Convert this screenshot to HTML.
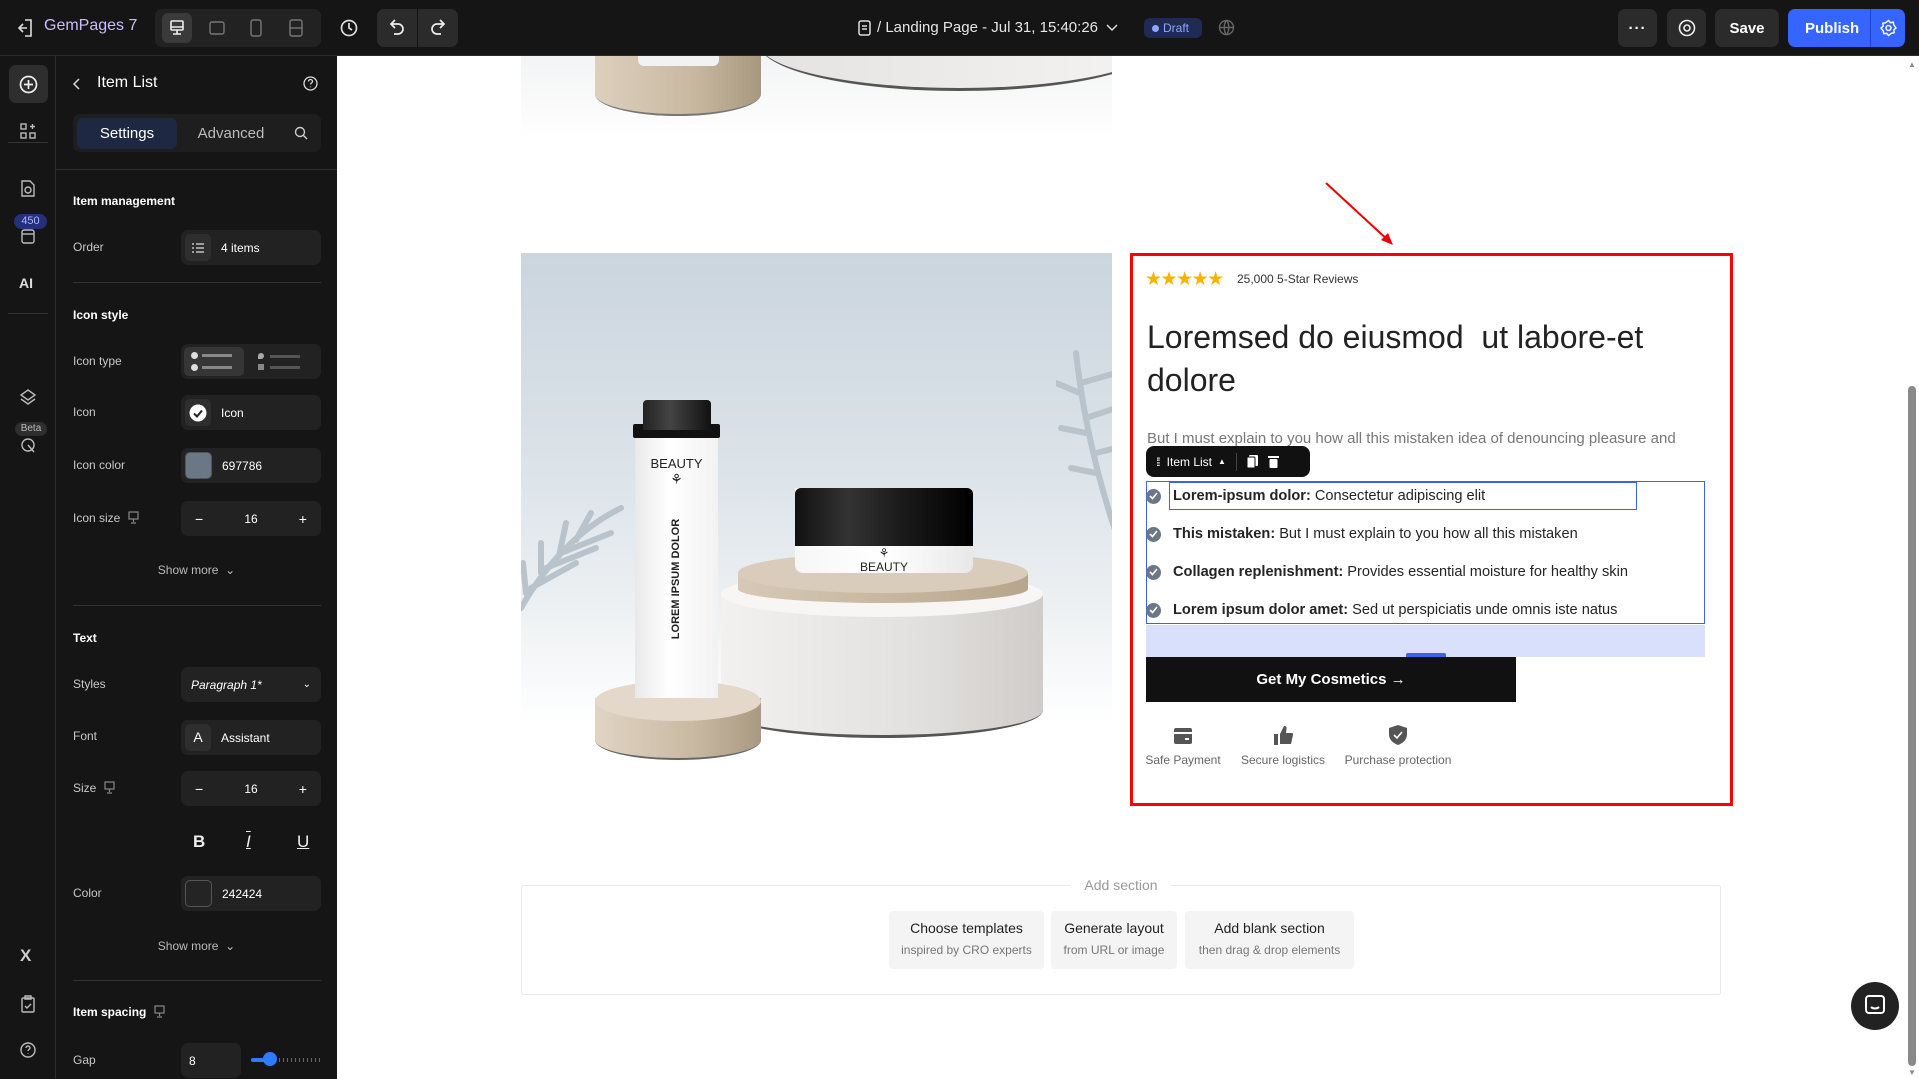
<!DOCTYPE html>
<html><head><meta charset="utf-8"><style>
*{box-sizing:border-box;margin:0;padding:0}
body{width:1919px;height:1079px;overflow:hidden;font-family:"Liberation Sans",sans-serif;background:#fff;position:relative}
.abs{position:absolute}
.top{left:0;top:0;width:1919px;height:56px;background:#151515;border-bottom:1px solid #2b2b2b}
.rail{left:0;top:56px;width:56px;height:1023px;background:#151515;border-right:1px solid #2b2b2b}
.panel{left:56px;top:56px;width:281px;height:1023px;background:#151515}
.lbl{position:absolute;left:17px;color:#c8c8c8;font-size:12px;transform:translateY(-50%)}
.hd{position:absolute;left:17px;color:#fff;font-size:12px;font-weight:bold;transform:translateY(-50%)}
.inp{position:absolute;left:125px;width:140px;height:35px;background:#222;border-radius:7px;color:#fff;font-size:12px;display:flex;align-items:center}
.sep{position:absolute;left:17px;width:248px;height:1px;background:#333}
.sm{position:absolute;left:0;width:281px;text-align:center;color:#bbb;font-size:12px;transform:translateY(-50%)}
.btn{position:absolute;top:9px;height:38px;border-radius:7px;background:#2b2b2b;color:#fff;display:flex;align-items:center;justify-content:center;font-size:15px;font-weight:bold}
.item{position:absolute;left:1146px;font-size:14.6px;color:#242424;display:flex;align-items:center;transform:translateY(-50%);white-space:nowrap}
.item b{margin-right:4px}
.chk{width:15px;height:15px;border-radius:50%;background:#697786;margin-right:12px;display:flex;align-items:center;justify-content:center}
.tb{position:absolute;top:911px;height:58px;background:#f4f4f4;border-radius:4px;text-align:center;padding-top:9px}
.tb .a{font-size:14px;color:#222}
.tb .b{font-size:12px;color:#777;margin-top:7px}
</style></head><body>

<div class="abs top">
  <svg class="abs" style="left:18px;top:19px" width="16" height="18" viewBox="0 0 16 18" fill="none" stroke="#ddd" stroke-width="1.6"><path d="M7 1h6v16H7M1 9h8M5 5l-4 4 4 4"/></svg>
  <div class="abs" style="left:44px;top:17px;color:#cbbcff;font-size:16px">GemPages 7</div>
  <div class="abs" style="left:155px;top:9px;width:166px;height:38px;background:#222;border-radius:7px"></div>
  <div class="abs" style="left:162px;top:13px;width:30px;height:30px;background:#3a3a3a;border-radius:6px"></div>
  <svg class="abs" style="left:170px;top:20px" width="14" height="16" viewBox="0 0 14 16" fill="none" stroke="#eee" stroke-width="1.6"><rect x="1" y="1" width="12" height="9" rx="1"/><path d="M7 10v4M3 14h8M1 7h12"/></svg>
  <svg class="abs" style="left:209px;top:21px" width="16" height="14" viewBox="0 0 16 14" fill="none" stroke="#777" stroke-width="1.4"><rect x="1" y="1" width="14" height="12" rx="2"/></svg>
  <svg class="abs" style="left:250px;top:19px" width="12" height="18" viewBox="0 0 12 18" fill="none" stroke="#777" stroke-width="1.4"><rect x="1" y="1" width="10" height="16" rx="2"/></svg>
  <svg class="abs" style="left:289px;top:19px" width="14" height="18" viewBox="0 0 14 18" fill="none" stroke="#777" stroke-width="1.4"><rect x="1" y="1" width="12" height="16" rx="2"/><path d="M1 9h12"/></svg>
  <svg class="abs" style="left:340px;top:19px" width="18" height="18" viewBox="0 0 18 18" fill="none" stroke="#ddd" stroke-width="1.7"><circle cx="9" cy="9" r="7.5"/><path d="M9 4v5l3 2"/></svg>
  <div class="abs" style="left:377px;top:9px;width:81px;height:38px;background:#2b2b2b;border-radius:7px"></div>
  <div class="abs" style="left:417px;top:9px;width:1px;height:38px;background:#151515"></div>
  <svg class="abs" style="left:390px;top:19px" width="14" height="16" viewBox="0 0 14 16" fill="none" stroke="#eee" stroke-width="1.7"><path d="M5 1L1 5l4 4M1 5h7a5 5 0 010 10H4"/></svg>
  <svg class="abs" style="left:431px;top:19px" width="14" height="16" viewBox="0 0 14 16" fill="none" stroke="#eee" stroke-width="1.7"><path d="M9 1l4 4-4 4M13 5H6a5 5 0 000 10h4"/></svg>
  <svg class="abs" style="left:858px;top:20px" width="13" height="16" viewBox="0 0 13 16" fill="none" stroke="#ddd" stroke-width="1.5"><rect x="1" y="1" width="11" height="14" rx="2"/><path d="M4 6h5M4 9h5"/></svg>
  <div class="abs" style="left:877px;top:19px;color:#e6e6e6;font-size:15px">/ Landing Page - Jul 31, 15:40:26</div>
  <svg class="abs" style="left:1106px;top:24px" width="12" height="8" viewBox="0 0 12 8" fill="none" stroke="#ddd" stroke-width="1.5"><path d="M1 1l5 5 5-5"/></svg>
  <div class="abs" style="left:1144px;top:18px;width:58px;height:20px;background:#1f2b55;border-radius:6px;color:#8fa6ff;font-size:12px;line-height:20px;padding-left:8px"><span style="display:inline-block;width:7px;height:7px;border-radius:50%;background:#8fa6ff;margin-right:4px;vertical-align:0"></span>Draft</div>
  <svg class="abs" style="left:1218px;top:19px" width="17" height="17" viewBox="0 0 17 17" fill="none" stroke="#666" stroke-width="1.4"><circle cx="8.5" cy="8.5" r="7"/><path d="M1.5 8.5h14M8.5 1.5c-3 3-3 11 0 14M8.5 1.5c3 3 3 11 0 14"/></svg>
  <div class="btn" style="left:1618px;width:39px;letter-spacing:1px">···</div>
  <div class="btn" style="left:1667px;width:39px"><svg width="18" height="18" viewBox="0 0 18 18" fill="none" stroke="#eee" stroke-width="1.6"><circle cx="9" cy="9" r="7.5"/><circle cx="9" cy="9" r="3"/></svg></div>
  <div class="btn" style="left:1715px;width:64px">Save</div>
  <div class="btn" style="left:1788px;width:117px;background:#3564ff;justify-content:flex-start;padding-left:17px">Publish</div>
  <div class="abs" style="left:1870px;top:9px;width:1px;height:38px;background:#1e43c8"></div>
  <svg class="abs" style="left:1880px;top:19px" width="17" height="18" viewBox="0 0 18 18" fill="none" stroke="#fff" stroke-width="1.5"><circle cx="9" cy="9" r="2.6"/><path d="M9 1l2 2.4 3-.6.6 3L17 9l-2.4 2 .4 3-3 .6L9 17l-2-2.4-3 .4-.6-3L1 9l2.4-2L3 4l3-.6z"/></svg>
</div>

<div class="abs rail">
  <div class="abs" style="left:9px;top:9px;width:39px;height:38px;background:#2e2e2e;border-radius:7px"></div>
  <svg class="abs" style="left:19px;top:19px" width="19" height="19" viewBox="0 0 19 19" fill="none" stroke="#eee" stroke-width="1.7"><circle cx="9.5" cy="9.5" r="8"/><path d="M9.5 5v9M5 9.5h9"/></svg>
  <svg class="abs" style="left:20px;top:67px" width="16" height="16" viewBox="0 0 16 16" fill="none" stroke="#bbb" stroke-width="1.4"><rect x="1" y="1" width="5" height="5"/><rect x="1" y="10" width="5" height="5"/><rect x="10" y="10" width="5" height="5"/><path d="M12.5 1v5M10 3.5h5"/></svg>
  <div class="abs" style="left:8px;top:86px;width:40px;height:1px;background:#333"></div>
  <svg class="abs" style="left:20px;top:124px" width="15" height="17" viewBox="0 0 15 17" fill="none" stroke="#bbb" stroke-width="1.4"><path d="M2 1h8l4 4v11H2z"/><circle cx="8" cy="10" r="3"/></svg>
  <div class="abs" style="left:14px;top:158px;width:33px;height:15px;background:#24307a;border-radius:8px;color:#aab8ff;font-size:11px;text-align:center;line-height:15px">450</div>
  <svg class="abs" style="left:21px;top:173px" width="14" height="15" viewBox="0 0 14 15" fill="none" stroke="#bbb" stroke-width="1.4"><rect x="1" y="1" width="12" height="13" rx="2"/><path d="M1 5h12"/></svg>
  <div class="abs" style="left:19px;top:219px;color:#ddd;font-size:14px;font-weight:bold">AI</div>
  <div class="abs" style="left:8px;top:257px;width:40px;height:1px;background:#333"></div>
  <svg class="abs" style="left:20px;top:333px" width="16" height="17" viewBox="0 0 16 17" fill="none" stroke="#bbb" stroke-width="1.4"><path d="M8 1l7 5-7 5-7-5zM1 10l7 5 7-5"/></svg>
  <div class="abs" style="left:15px;top:366px;width:32px;height:14px;background:#2e2e2e;border-radius:7px;color:#bbb;font-size:10px;text-align:center;line-height:14px">Beta</div>
  <svg class="abs" style="left:21px;top:382px" width="15" height="16" viewBox="0 0 15 16" fill="none" stroke="#bbb" stroke-width="1.4"><circle cx="7" cy="7" r="6"/><path d="M7 7l6 7"/></svg>
  <div class="abs" style="left:20px;top:890px;color:#ccc;font-size:17px;font-weight:bold">X</div>
  <svg class="abs" style="left:21px;top:939px" width="14" height="18" viewBox="0 0 14 18" fill="none" stroke="#bbb" stroke-width="1.4"><rect x="1" y="3" width="12" height="14" rx="1"/><path d="M4 1h6v3H4zM4 11l2 2 4-4"/></svg>
  <svg class="abs" style="left:20px;top:986px" width="16" height="16" viewBox="0 0 16 16" fill="none" stroke="#bbb" stroke-width="1.4"><circle cx="8" cy="8" r="7"/><path d="M6 6a2 2 0 114 0c0 1.5-2 1.5-2 3M8 11.5v.5"/></svg>
</div>

<div class="abs panel">
  <svg class="abs" style="left:17px;top:22px" width="8" height="12" viewBox="0 0 8 12" fill="none" stroke="#ddd" stroke-width="1.5"><path d="M6 1L1 6l5 5"/></svg>
  <div class="abs" style="left:41px;top:18px;color:#fff;font-size:16px">Item List</div>
  <svg class="abs" style="left:247px;top:20px" width="15" height="15" viewBox="0 0 15 15" fill="none" stroke="#ddd" stroke-width="1.3"><circle cx="7.5" cy="7.5" r="6.5"/><path d="M5.5 5.5a2 2 0 114 0c0 1.5-2 1.5-2 3M7.5 10.5v.8"/></svg>
  <div class="abs" style="left:17px;top:58px;width:248px;height:38px;background:#1e1e1e;border-radius:7px"></div>
  <div class="abs" style="left:21px;top:62px;width:100px;height:31px;background:#1f2843;border-radius:6px;color:#fff;font-size:15px;text-align:center;line-height:31px">Settings</div>
  <div class="abs" style="left:140px;top:62px;width:70px;color:#bbb;font-size:15px;text-align:center;line-height:31px">Advanced</div>
  <svg class="abs" style="left:238px;top:70px" width="14" height="14" viewBox="0 0 14 14" fill="none" stroke="#ccc" stroke-width="1.4"><circle cx="6" cy="6" r="4.5"/><path d="M9.5 9.5L13 13"/></svg>
  <div class="abs" style="left:0;top:113px;width:281px;height:1px;background:#2e2e2e"></div>

  <div class="hd" style="top:145px">Item management</div>
  <div class="lbl" style="top:191px">Order</div>
  <div class="inp" style="top:174px"><div style="width:26px;height:27px;background:#2e2e2e;border-radius:5px;margin:0 10px 0 4px;display:flex;align-items:center;justify-content:center"><svg width="12" height="10" viewBox="0 0 12 10" stroke="#ddd" stroke-width="1.3"><path d="M0 1h2M4 1h8M0 5h2M4 5h8M0 9h2M4 9h8"/></svg></div>4 items</div>
  <div class="sep" style="top:226px"></div>

  <div class="hd" style="top:259px">Icon style</div>
  <div class="lbl" style="top:305px">Icon type</div>
  <div class="inp" style="top:288px;padding:3px"><div style="width:60px;height:29px;background:#363636;border-radius:5px;position:relative">
    <span style="position:absolute;left:7px;top:5px;width:7px;height:7px;border-radius:50%;background:#ddd"></span><span style="position:absolute;left:18px;top:7px;width:30px;height:3px;background:#888"></span>
    <span style="position:absolute;left:7px;top:17px;width:7px;height:7px;border-radius:50%;background:#ddd"></span><span style="position:absolute;left:18px;top:19px;width:30px;height:3px;background:#888"></span></div>
    <div style="width:70px;height:29px;position:relative">
    <span style="position:absolute;left:14px;top:6px;width:6px;height:6px;border-radius:50% 50% 50% 0;background:#aaa"></span><span style="position:absolute;left:26px;top:8px;width:30px;height:3px;background:#555"></span>
    <span style="position:absolute;left:14px;top:17px;width:6px;height:6px;background:#888"></span><span style="position:absolute;left:26px;top:19px;width:30px;height:3px;background:#555"></span></div></div>
  <div class="lbl" style="top:356px">Icon</div>
  <div class="inp" style="top:339px"><div style="width:26px;height:27px;background:#2e2e2e;border-radius:5px;margin:0 10px 0 4px;display:flex;align-items:center;justify-content:center"><svg width="18" height="18" viewBox="0 0 18 18"><circle cx="9" cy="9" r="8.5" fill="#fff"/><path d="M5 9.5l3 3 5-6" stroke="#222" stroke-width="2" fill="none"/></svg></div>Icon</div>
  <div class="lbl" style="top:409px">Icon color</div>
  <div class="inp" style="top:392px"><div style="width:27px;height:27px;background:#697786;border-radius:5px;margin:0 10px 0 4px;border:1px solid #555"></div>697786</div>
  <div class="lbl" style="top:462px">Icon size <svg width="11" height="13" viewBox="0 0 11 13" fill="none" stroke="#888" stroke-width="1.2" style="vertical-align:-2px;margin-left:4px"><rect x="1" y="1" width="9" height="7"/><path d="M5.5 8v3M3 12h5"/></svg></div>
  <div class="inp" style="top:445px;justify-content:space-between;padding:0 14px;font-size:14px"><span>−</span><span style="font-size:12px">16</span><span>+</span></div>
  <div class="sm" style="top:514px">Show more &nbsp;⌄</div>
  <div class="sep" style="top:549px"></div>

  <div class="hd" style="top:582px">Text</div>
  <div class="lbl" style="top:628px">Styles</div>
  <div class="inp" style="top:611px;padding:0 10px;justify-content:space-between;font-style:italic"><span>Paragraph 1*</span><span style="font-style:normal;font-size:10px">⌄</span></div>
  <div class="lbl" style="top:680px">Font</div>
  <div class="inp" style="top:664px"><div style="width:26px;height:27px;background:#2e2e2e;border-radius:5px;margin:0 10px 0 4px;text-align:center;line-height:27px;font-size:14px">A</div>Assistant</div>
  <div class="lbl" style="top:732px">Size <svg width="11" height="13" viewBox="0 0 11 13" fill="none" stroke="#888" stroke-width="1.2" style="vertical-align:-2px;margin-left:4px"><rect x="1" y="1" width="9" height="7"/><path d="M5.5 8v3M3 12h5"/></svg></div>
  <div class="inp" style="top:715px;justify-content:space-between;padding:0 14px;font-size:14px"><span>−</span><span style="font-size:12px">16</span><span>+</span></div>
  <div class="abs" style="left:137px;top:776px;color:#eee;font-size:17px;font-weight:bold">B</div>
  <div class="abs" style="left:190px;top:776px;color:#eee;font-size:17px;font-style:italic;text-decoration:underline overline">I</div>
  <div class="abs" style="left:241px;top:776px;color:#eee;font-size:17px;text-decoration:underline">U</div>
  <div class="lbl" style="top:837px">Color</div>
  <div class="inp" style="top:820px"><div style="width:27px;height:27px;background:#242424;border-radius:5px;margin:0 10px 0 4px;border:1px solid #555"></div>242424</div>
  <div class="sm" style="top:890px">Show more &nbsp;⌄</div>
  <div class="sep" style="top:924px"></div>
  <div class="hd" style="top:956px">Item spacing <svg width="11" height="13" viewBox="0 0 11 13" fill="none" stroke="#888" stroke-width="1.2" style="vertical-align:-2px;margin-left:4px"><rect x="1" y="1" width="9" height="7"/><path d="M5.5 8v3M3 12h5"/></svg></div>
  <div class="lbl" style="top:1004px">Gap</div>
  <div class="inp" style="top:987px;width:60px;padding-left:8px">8</div>
  <div class="abs" style="left:195px;top:1002px;width:18px;height:4px;background:#2f7bff;border-radius:2px"></div>
  <div class="abs" style="left:207px;top:996px;width:14px;height:14px;background:#2f7bff;border-radius:50%"></div>
  <div class="abs" style="left:223px;top:1002px;width:42px;height:4px;background:repeating-linear-gradient(90deg,#666 0 1px,transparent 1px 4px)"></div>
</div>

<div class="abs" style="left:521px;top:56px;width:591px;height:81px;background:linear-gradient(#f3f4f5,#fbfbfb 70%,#fff);overflow:hidden">
  <div class="abs" style="left:238px;top:-60px;width:400px;height:95px;border-radius:50%;background:linear-gradient(90deg,#e4e3e2,#f4f3f2);border-bottom:3px solid #555"></div>
  <div class="abs" style="left:74px;top:-30px;width:166px;height:90px;background:linear-gradient(90deg,#ddd0bd,#c8b8a0 60%,#a8987f);border-radius:0 0 50% 50%/0 0 22px 22px;border-bottom:2px solid #777"></div>
  <div class="abs" style="left:117px;top:-10px;width:81px;height:20px;background:#f2f2f2;border-radius:0 0 6px 6px"></div>
</div>

<div class="abs" style="left:521px;top:253px;width:591px;height:512px;background:linear-gradient(#cbd5de,#dde4ea 45%,#eef1f3 70%,#fff 92%);overflow:hidden">
  <svg class="abs" style="left:0;top:215px" width="110" height="150" viewBox="0 0 110 150"><g stroke="#b9c3cc" stroke-width="6" stroke-linecap="round" fill="none"><path d="M0 140 Q40 70 100 40"/><path d="M10 120 L55 95"/><path d="M25 100 L75 80"/><path d="M40 85 L90 65"/><path d="M5 125 L2 95"/><path d="M20 105 L20 75"/><path d="M38 88 L45 55"/><path d="M55 72 L70 45"/></g></svg>
  <svg class="abs" style="left:535px;top:90px" width="60" height="200" viewBox="0 0 60 200"><g stroke="#b9c3cc" stroke-width="6" stroke-linecap="round" fill="none"><path d="M60 190 Q30 100 20 10"/><path d="M25 40 L60 30"/><path d="M30 75 L60 65"/><path d="M40 110 L60 105"/><path d="M24 50 L0 40"/><path d="M30 90 L5 85"/><path d="M40 130 L15 125"/></g></svg>
  <div class="abs" style="left:200px;top:340px;width:322px;height:145px;background:linear-gradient(90deg,#f2f1f0,#e3e1df 60%,#cfccc9);border-radius:50%/0 0 28px 28px;border-bottom:3px solid #555"></div>
  <div class="abs" style="left:200px;top:318px;width:322px;height:46px;border-radius:50%;background:#f7f6f5"></div>
  <div class="abs" style="left:217px;top:320px;width:290px;height:30px;background:linear-gradient(90deg,#d7c9b5,#b7a68d);border-radius:50%/0 0 14px 14px"></div>
  <div class="abs" style="left:217px;top:300px;width:290px;height:40px;border-radius:50%;background:#d9ccba"></div>
  <div class="abs" style="left:274px;top:235px;width:178px;height:85px;background:linear-gradient(90deg,#f6f6f6,#fff,#e8e8e8);border-radius:0 0 8px 8px"></div>
  <div class="abs" style="left:274px;top:235px;width:178px;height:58px;background:linear-gradient(90deg,#111,#333 30%,#1a1a1a 60%,#000);border-radius:6px 6px 0 0"></div>
  <div class="abs" style="left:274px;top:293px;width:178px;text-align:center;font-family:'Liberation Sans Narrow','Liberation Sans',sans-serif;font-size:12px;color:#222;line-height:14px">⚘<br>BEAUTY</div>
  <div class="abs" style="left:74px;top:445px;width:166px;height:62px;background:linear-gradient(90deg,#e0d4c3,#c9b9a2 60%,#a99981);border-radius:50%/0 0 20px 20px;border-bottom:2px solid #666"></div>
  <div class="abs" style="left:74px;top:428px;width:166px;height:40px;border-radius:50%;background:#e3d8c9"></div>
  <div class="abs" style="left:114px;top:185px;width:83px;height:260px;background:linear-gradient(90deg,#e9e9e9,#fff 40%,#f2f2f2);"></div>
  <div class="abs" style="left:112px;top:171px;width:87px;height:14px;background:#111;border-radius:2px"></div>
  <div class="abs" style="left:122px;top:147px;width:68px;height:30px;background:linear-gradient(90deg,#222,#444 40%,#111);border-radius:4px 4px 0 0"></div>
  <div class="abs" style="left:114px;top:203px;width:83px;text-align:center;font-size:13px;color:#222;font-family:'Liberation Sans Narrow','Liberation Sans',sans-serif">BEAUTY<br><span style="font-size:14px">⚘</span></div>
  <div class="abs" style="left:90px;top:320px;width:130px;text-align:center;transform:rotate(-90deg);font-size:11px;font-weight:bold;color:#222;white-space:nowrap">LOREM IPSUM DOLOR</div>
</div>

<svg class="abs" style="left:1320px;top:178px" width="80" height="72" viewBox="0 0 80 72"><path d="M6 5L70 64" stroke="#e00" stroke-width="2"/><path d="M73 67L61 62L68 55z" fill="#e00"/></svg>
<div class="abs" style="left:1130px;top:253px;width:603px;height:553px;border:3px solid #f00"></div>

<div class="abs" style="left:1145px;top:268px;color:#f6b400;font-size:19px;letter-spacing:-1.5px">★★★★★</div>
<div class="abs" style="left:1237px;top:272px;color:#333;font-size:12px">25,000 5-Star Reviews</div>
<div class="abs" style="left:1147px;top:316px;color:#222;font-size:32px;line-height:43px;width:560px">Loremsed do eiusmod&nbsp; ut labore-et dolore</div>
<div class="abs" style="left:1147px;top:430px;color:#777;font-size:15px">But I must explain to you how all this mistaken idea of denouncing pleasure and</div>

<div class="abs" style="left:1146px;top:446px;width:164px;height:31px;background:#111;border-radius:8px;color:#fff;font-size:12px;display:flex;align-items:center;padding-left:10px">
  <span style="font-size:12px;letter-spacing:-2px;margin-right:8px">⁞⁞</span>Item List <span style="font-size:8px;margin:0 10px 0 6px">▲</span><span style="width:1px;height:18px;background:#444;margin-right:10px"></span>
  <svg width="11" height="13" viewBox="0 0 11 13" fill="#fff"><rect x="2" y="0" width="9" height="11" rx="1"/><rect x="0" y="2" width="8" height="11" rx="1" stroke="#111"/></svg>
  <svg style="margin-left:10px" width="11" height="13" viewBox="0 0 11 13" fill="#fff"><rect x="0" y="1" width="11" height="2"/><rect x="1.5" y="4" width="8" height="9" rx="1"/></svg>
</div>
<div class="abs" style="left:1146px;top:481px;width:559px;height:143px;border:1px solid #3a63e8"></div>
<div class="abs" style="left:1169px;top:482px;width:468px;height:28px;border:1px solid #3a63e8"></div>
<div class="item" style="top:496px"><span class="chk"><svg width="9" height="8" viewBox="0 0 9 8"><path d="M1 4l2.5 2.5L8 1" stroke="#fff" stroke-width="1.6" fill="none"/></svg></span><b>Lorem-ipsum dolor:</b>Consectetur adipiscing elit</div>
<div class="item" style="top:534px"><span class="chk"><svg width="9" height="8" viewBox="0 0 9 8"><path d="M1 4l2.5 2.5L8 1" stroke="#fff" stroke-width="1.6" fill="none"/></svg></span><b>This mistaken:</b>But I must explain to you how all this mistaken</div>
<div class="item" style="top:572px"><span class="chk"><svg width="9" height="8" viewBox="0 0 9 8"><path d="M1 4l2.5 2.5L8 1" stroke="#fff" stroke-width="1.6" fill="none"/></svg></span><b>Collagen replenishment:</b>Provides essential moisture for healthy skin</div>
<div class="item" style="top:610px"><span class="chk"><svg width="9" height="8" viewBox="0 0 9 8"><path d="M1 4l2.5 2.5L8 1" stroke="#fff" stroke-width="1.6" fill="none"/></svg></span><b>Lorem ipsum dolor amet:</b>Sed ut perspiciatis unde omnis iste natus</div>
<div class="abs" style="left:1146px;top:625px;width:559px;height:32px;background:#d8e0fb"></div>
<div class="abs" style="left:1406px;top:653px;width:40px;height:4px;background:#3a63e8;border-radius:2px 2px 0 0"></div>

<div class="abs" style="left:1146px;top:657px;width:370px;height:45px;background:#111;color:#fff;font-size:15px;font-weight:bold;display:flex;align-items:center;justify-content:center">Get My Cosmetics&nbsp; <span style="font-weight:normal">→</span></div>

<svg class="abs" style="left:1174px;top:728px" width="18" height="16" viewBox="0 0 18 16"><rect x="0" y="0" width="18" height="16" rx="2" fill="#555"/><rect x="0" y="4" width="18" height="2" fill="#fff"/><rect x="11" y="10" width="4" height="2" fill="#fff"/></svg>
<svg class="abs" style="left:1274px;top:726px" width="19" height="19" viewBox="0 0 19 19" fill="#555"><path d="M0 8h4v11H0zM6 8l4-8c2 0 3 1 2.5 3L12 7h6c1 0 1.5 1 1 2l-2 9H6z"/></svg>
<svg class="abs" style="left:1389px;top:725px" width="18" height="20" viewBox="0 0 18 20"><path d="M9 0l9 3v6c0 6-4 9-9 11C4 18 0 15 0 9V3z" fill="#555"/><path d="M5 10l3 3 5-6" stroke="#fff" stroke-width="1.6" fill="none"/></svg>
<div class="abs" style="left:1183px;top:753px;transform:translateX(-50%);color:#666;font-size:12px;white-space:nowrap">Safe Payment</div>
<div class="abs" style="left:1283px;top:753px;transform:translateX(-50%);color:#666;font-size:12px;white-space:nowrap">Secure logistics</div>
<div class="abs" style="left:1398px;top:753px;transform:translateX(-50%);color:#666;font-size:12px;white-space:nowrap">Purchase protection</div>

<div class="abs" style="left:521px;top:885px;width:1200px;height:110px;border:1px solid #e8e8e8;border-radius:3px"></div>
<div class="abs" style="left:1071px;top:877px;width:100px;background:#fff;text-align:center;color:#999;font-size:14px">Add section</div>
<div class="tb" style="left:889px;width:155px"><div class="a">Choose templates</div><div class="b">inspired by CRO experts</div></div>
<div class="tb" style="left:1051px;width:126px"><div class="a">Generate layout</div><div class="b">from URL or image</div></div>
<div class="tb" style="left:1185px;width:169px"><div class="a">Add blank section</div><div class="b">then drag &amp; drop elements</div></div>

<div class="abs" style="left:1851px;top:982px;width:48px;height:48px;border-radius:50%;background:#222;display:flex;align-items:center;justify-content:center"><svg width="20" height="22" viewBox="0 0 20 22" fill="none" stroke="#fff" stroke-width="2"><rect x="1" y="1" width="18" height="17" rx="3"/><path d="M6 12c2 2 6 2 8 0"/></svg></div>

<div class="abs" style="left:1905px;top:56px;width:14px;height:1023px;background:#fff"></div>
<div class="abs" style="left:1908px;top:386px;width:8px;height:680px;background:#8a8a8a;border-radius:4px"></div>
<div class="abs" style="left:1908px;top:60px;color:#888;font-size:8px">▲</div>
<div class="abs" style="left:1908px;top:1068px;color:#888;font-size:8px">▼</div>
</body></html>
